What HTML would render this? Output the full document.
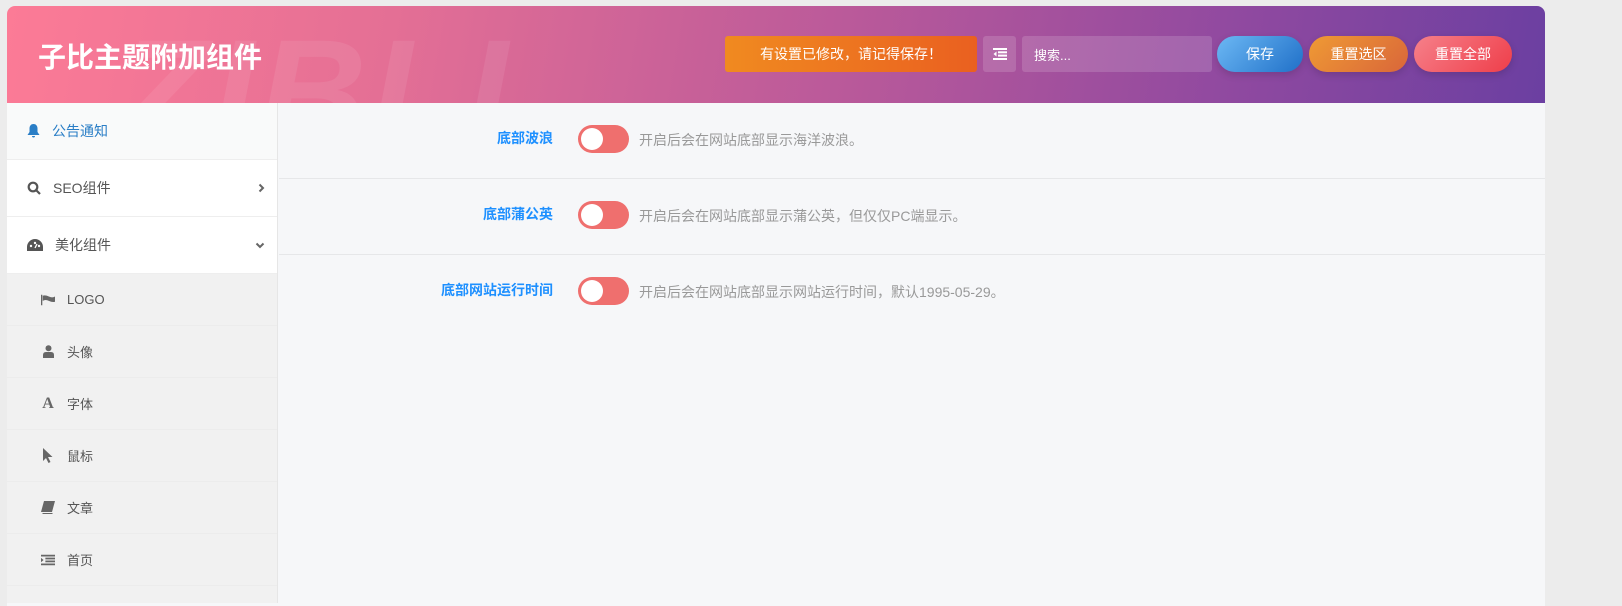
<!DOCTYPE html>
<html><head><meta charset="utf-8"><style>
*{margin:0;padding:0;box-sizing:border-box}
body{width:1622px;height:592px;background:#ececec;font-family:"Liberation Sans","Noto Sans CJK SC",sans-serif;overflow:hidden;position:relative}
.panel{position:absolute;left:7px;top:6px;width:1538px;height:600px;border-radius:8px 8px 0 0;overflow:hidden;background:#f6f7f9}
.hdr{position:absolute;left:0;top:0;width:1538px;height:97px;background:linear-gradient(100deg,#fc7b96 0%,#e46f95 25%,#b9599a 55%,#8f49a0 80%,#6b3fa1 100%);overflow:hidden}
.wm{position:absolute;left:110px;top:0px;font-size:150px;font-weight:bold;font-style:italic;color:rgba(255,255,255,.08);letter-spacing:4px}
.title{position:absolute;left:31px;top:30px;font-size:28px;font-weight:bold;color:#fff}
.b{position:absolute;top:30px;height:36px;color:#fff;font-size:14px;display:flex;align-items:center;justify-content:center}
.side{position:absolute;left:0;top:97px;width:271px;height:500px;background:#f1f1f1;border-right:1px solid #e6e6e6}
.it{height:57px;display:flex;align-items:center;padding-left:20px;font-size:14px;color:#555;border-bottom:1px solid #eee;background:#fff;position:relative}
.it svg{margin-right:12px}
.it .ch{position:absolute;right:12px;margin:0}
.sub{height:52px;display:flex;align-items:center;padding-left:34px;font-size:13px;color:#555;border-bottom:1px solid #ececec;background:#f1f1f1}
.sub .ic{width:14px;margin-right:12px;display:flex;justify-content:center}
.row{position:absolute;left:272px;width:1266px;height:76px;border-bottom:1px solid #e6e7e9}
.lbl{position:absolute;right:992px;top:25px;font-size:14px;font-weight:bold;color:#1e90ff}
.tg{position:absolute;left:299px;top:22px;width:51px;height:28px;border-radius:14px;background:#ef6f6e}
.tg:after{content:"";position:absolute;left:3px;top:3px;width:22px;height:22px;border-radius:50%;background:#fff}
.ds{position:absolute;left:360px;top:27px;font-size:14px;color:#999}
</style></head><body>
<div class="panel">
<div class="hdr">
<div class="wm">ZIBLL</div>
<div class="title">子比主题附加组件</div>
<div class="b" style="left:718px;width:252px;border-radius:3px;background:linear-gradient(90deg,#f08a20,#ea6020)">有设置已修改，请记得保存！</div>
<div class="b" style="left:976px;width:33px;border-radius:3px;background:rgba(255,255,255,.15)"><svg width="14" height="12" viewBox="0 0 14 12" fill="#fff"><rect x="0" y="0" width="14" height="2"/><rect x="5" y="3.3" width="9" height="2"/><rect x="5" y="6.6" width="9" height="2"/><rect x="0" y="10" width="14" height="2"/><path d="M3.5 3.5 0.5 6 3.5 8.5z"/></svg></div>
<div class="b" style="left:1015px;width:190px;border-radius:3px;background:rgba(255,255,255,.15);justify-content:flex-start;padding-left:12px;font-size:13px">搜索...</div>
<div class="b" style="left:1210px;width:86px;border-radius:18px;background:linear-gradient(135deg,#6cb8f4,#2070c8);box-shadow:0 3px 8px rgba(0,0,0,.15)">保存</div>
<div class="b" style="left:1302px;width:99px;border-radius:18px;background:linear-gradient(135deg,#ef9a34,#d9663a);box-shadow:0 3px 8px rgba(0,0,0,.15)">重置选区</div>
<div class="b" style="left:1407px;width:98px;border-radius:18px;background:linear-gradient(135deg,#f6808a,#ef3e4a);box-shadow:0 3px 8px rgba(0,0,0,.15)">重置全部</div>
</div>
<div class="side">
<div class="it" style="background:#f9fafa;color:#2a7ec6"><svg width="13" height="14" viewBox="0 0 13 14" fill="#2a7ec6"><path d="M6.5 0C4 0 2.5 2 2.5 4.5V8L0.5 11H12.5L10.5 8V4.5C10.5 2 9 0 6.5 0zM5 12h3a1.5 1.5 0 0 1-3 0z"/></svg>公告通知</div>
<div class="it"><svg width="14" height="14" viewBox="0 0 14 14" fill="none" stroke="#555" stroke-width="2.2"><circle cx="6" cy="6" r="4.3"/><path d="M9 9l4 4"/></svg>SEO组件<svg class="ch" width="7" height="10" viewBox="0 0 7 10" fill="none" stroke="#666" stroke-width="2"><path d="M1.5 1.5 5 5 1.5 8.5"/></svg></div>
<div class="it"><svg width="16" height="13" viewBox="0 0 16 13" fill="#555"><path d="M8 0a8 8 0 0 0-8 8v4h16V8a8 8 0 0 0-8-8z"/><circle cx="4" cy="7" r="1.2" fill="#fff"/><circle cx="8" cy="4" r="1.2" fill="#fff"/><circle cx="12" cy="7" r="1.2" fill="#fff"/><path d="M8 9l2-4" stroke="#fff" stroke-width="1.3"/></svg>美化组件<svg class="ch" width="10" height="7" viewBox="0 0 10 7" fill="none" stroke="#666" stroke-width="2"><path d="M1.5 1.5 5 5 8.5 1.5"/></svg></div>
<div class="sub"><span class="ic"><svg width="16" height="12" viewBox="0 0 16 12" fill="#666"><rect x="0" y="0" width="1.5" height="12"/><path d="M2 1q3-1 7 1t7 0v6q-3 1-7-1t-7 0z"/></svg></span>LOGO</div>
<div class="sub"><span class="ic"><svg width="11" height="13" viewBox="0 0 11 13" fill="#666"><circle cx="5.5" cy="3.2" r="3"/><path d="M0 13v-3q0-3 3-3h5q3 0 3 3v3z"/></svg></span>头像</div>
<div class="sub"><span class="ic" style="font-family:'Liberation Serif',serif;font-weight:bold;font-size:16px;color:#666">A</span>字体</div>
<div class="sub"><span class="ic"><svg width="10" height="15" viewBox="0 0 10 15" fill="#666"><path d="M0 0v13l3-3 2.5 5 2-1-2.5-5h4.5z"/></svg></span>鼠标</div>
<div class="sub"><span class="ic"><svg width="14" height="13" viewBox="0 0 14 13" fill="#666"><path d="M3 0h11l-3 11H0zM1.5 12h10v1h-10z"/></svg></span>文章</div>
<div class="sub"><span class="ic"><svg width="16" height="12" viewBox="0 0 16 12" fill="#666"><rect x="0" y="0" width="16" height="2"/><rect x="5" y="3.3" width="11" height="2"/><rect x="5" y="6.6" width="11" height="2"/><rect x="0" y="10" width="16" height="2"/><path d="M0 3.5 3 6 0 8.5z"/></svg></span>首页</div>
</div>
<div class="row" style="top:97px"><div class="lbl">底部波浪</div><div class="tg"></div><div class="ds">开启后会在网站底部显示海洋波浪。</div></div>
<div class="row" style="top:173px"><div class="lbl">底部蒲公英</div><div class="tg"></div><div class="ds">开启后会在网站底部显示蒲公英，但仅仅PC端显示。</div></div>
<div class="row" style="top:249px;border-bottom:none"><div class="lbl">底部网站运行时间</div><div class="tg"></div><div class="ds">开启后会在网站底部显示网站运行时间，默认1995-05-29。</div></div>
</div>
</body></html>
